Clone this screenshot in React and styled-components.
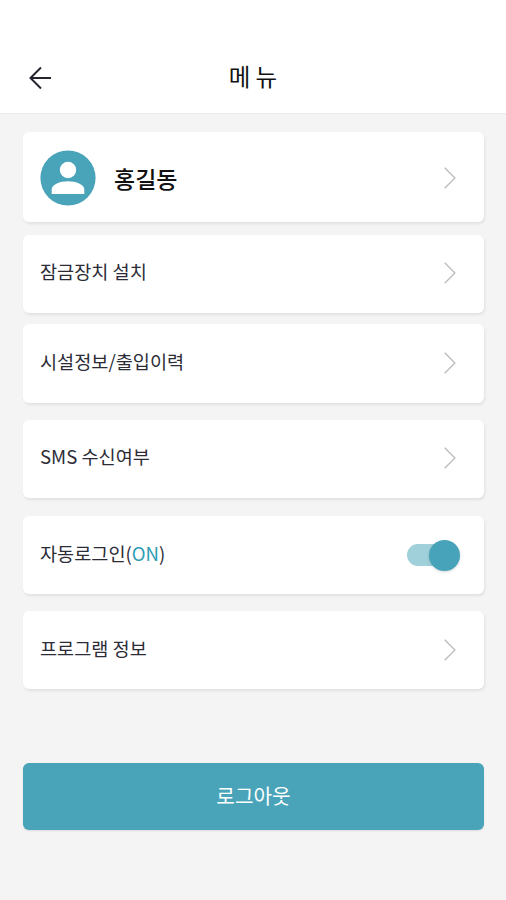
import styled, { createGlobalStyle } from "styled-components"
import {useState} from "react"

const GlobalStyle = createGlobalStyle `
* {
  box-sizing: border-box;
}
body {
  margin: 0;
  background-color: #f4f4f4;
  font-family: "Noto Sans CJK KR", sans-serif;
}
`

const Page = styled.div `
width: 506px;
height: 900px;
overflow: hidden;
background-color: #f4f4f4;
`

const Header = styled.header `
display: grid;
grid-template-columns: 80px 1fr 80px;
align-items: center;
height: 113px;
padding-top: 42px;
background-color: #fff;
box-shadow: 0 1px 1px #ececec;
`

const BackButton = styled.button `
display: flex;
width: 24px;
height: 24px;
margin-left: 28px;
padding: 0;
border: none;
background: none;
`

const Title = styled.h1 `
margin: 0;
padding-bottom: 4px;
font-size: 23.5px;
font-weight: 400;
line-height: 34px;
text-align: center;
color: #111;
`

const List = styled.main `
display: flex;
flex-direction: column;
padding: 19px 22px 0 23px;
`

const Card = styled.div `
display: flex;
align-items: center;
justify-content: space-between;
height: ${({$height}) => $height || 78}px;
margin-bottom: ${({$gap}) => $gap}px;
padding: ${({$top}) => $top || 0}px 28px ${({$bottom}) => $bottom || 0}px 17px;
border-radius: 6px;
background-color: #fff;
box-shadow: 1px 2px 3px rgba(0, 0, 0, 0.08);
`

const Label = styled.span `
padding-bottom: 5px;
font-size: 18.6px;
line-height: 28px;
white-space: nowrap;
color: #2c2c36;
`

const On = styled.span `
color: #2f9db5;
`

const Profile = styled.div `
display: flex;
align-items: center;
gap: 18px;
`

const Name = styled.span `
font-size: 23px;
font-weight: 500;
line-height: 34px;
color: #111;
`

const Toggle = styled.button `
display: flex;
align-items: center;
justify-content: ${({$on}) => ($on ? "flex-end" : "flex-start")};
width: 49px;
height: 22px;
margin: 0;
padding: 0;
border: none;
border-radius: 11px;
background-color: ${({$on}) => ($on ? "#a0d0da" : "#ccc")};
`

const Knob = styled.span `
flex: none;
width: 31px;
height: 31px;
margin-right: -4px;
border-radius: 50%;
background-color: ${({$on}) => ($on ? "#47a3b9" : "#fff")};
box-shadow: 0 1px 3px rgba(0, 0, 0, 0.16);
`

const Logout = styled.button `
height: 67px;
padding: 0 0 2px;
border: none;
border-radius: 6px;
background-color: #49a4ba;
box-shadow: 0 1px 2px rgba(0, 0, 0, 0.1);
font-family: inherit;
font-size: 20.2px;
font-weight: 400;
line-height: 30px;
color: #fff;
`

const Arrow = () => (
    <svg width="24" height="24" viewBox="0 0 24 24" fill="none" stroke="#25252f" strokeWidth="2">
        <path d="M13 1.5L2.5 12L13 22.5M2.5 12H23" />
    </svg>
)

const Chevron = () => (
    <svg width="13" height="22" viewBox="0 0 13 22" fill="none" stroke="#bbb" strokeWidth="1.3">
        <path d="M1.7 0.8L11.9 11L1.7 21.2" />
    </svg>
)

const Avatar = () => (
    <svg width="56" height="56" viewBox="0 0 56 56">
        <circle cx="28" cy="28" r="27.6" fill="#49a4ba" />
        <circle cx="28" cy="20" r="8.2" fill="#fff" />
        <path d="M11.7 44V39.5C11.7 34.5 20 31.3 28 31.3S44.3 34.5 44.3 39.5V44Z" fill="#fff" />
    </svg>
)

const App = () => {
    const [auto, setAuto] = useState(true)

    return (
        <Page>
            <GlobalStyle />
            <Header>
                <BackButton aria-label="뒤로"><Arrow /></BackButton>
                <Title>메 뉴</Title>
            </Header>
            <List>
                <Card $height={90} $gap={13} $top={2}>
                    <Profile>
                        <Avatar />
                        <Name>홍길동</Name>
                    </Profile>
                    <Chevron />
                </Card>
                <Card $gap={11} $bottom={2}>
                    <Label>잠금장치 설치</Label>
                    <Chevron />
                </Card>
                <Card $height={79} $gap={17} $bottom={1}>
                    <Label>시설정보/출입이력</Label>
                    <Chevron />
                </Card>
                <Card $gap={18} $bottom={2}>
                    <Label>SMS 수신여부</Label>
                    <Chevron />
                </Card>
                <Card $gap={17}>
                    <Label>자동로그인(<On>{auto ? "ON" : "OFF"}</On>)</Label>
                    <Toggle $on={auto} onClick={() => setAuto(!auto)}>
                        <Knob $on={auto} />
                    </Toggle>
                </Card>
                <Card $gap={74}>
                    <Label>프로그램 정보</Label>
                    <Chevron />
                </Card>
                <Logout>로그아웃</Logout>
            </List>
        </Page>
    )
}

export default App
